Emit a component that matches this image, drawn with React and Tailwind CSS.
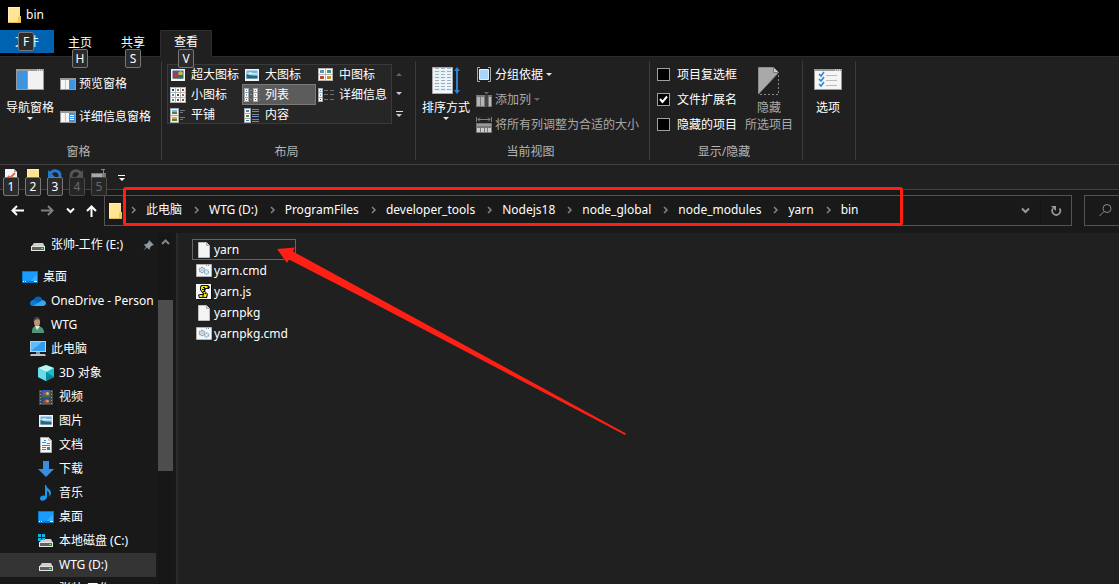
import React from "react";

const FONT = "font-['Noto_Sans','Noto_Sans_CJK_SC',sans-serif]";

function Svg({ w = 16, h = 16, children, className = "" }) {
  return (
    <svg width={w} height={h} viewBox={`0 0 ${w} ${h}`} className={`shrink-0 ${className}`} aria-hidden="true">
      {children}
    </svg>
  );
}

function Caret({ color = "#e6e6e6", up = false }) {
  return (
    <Svg w={6} h={3}>
      <path d={up ? "M0 3h6L3 0z" : "M0 0h6L3 3z"} fill={color} />
    </Svg>
  );
}

function FolderIcon() {
  return (
    <Svg w={14} h={16}>
      <path d="M1 0h12v9h1v7H1z" fill="#ffe594" />
      <path d="M1 0h12v1H1zM1 0h1v16H1z" fill="#fff0bb" />
      <path d="M11 15V10l1.500-1H14v6.500z" fill="#f0c95b" />
      <path d="M1 15h13v1H1z" fill="#e3bb50" />
    </Svg>
  );
}

function NavPaneIcon() {
  return (
    <Svg w={28} h={21}>
      <path d="M0 0h28v21H0z" fill="#9a9a9a" />
      <path d="M1 2h10v18H1z" fill="#3f95dd" />
      <path d="M12 2h15v18H12z" fill="#f2f2f2" />
      <path d="M21 0.500h1v1h-1zM23 .5h1v1h-1zM25 .5h1v1h-1z" fill="#fff" />
    </Svg>
  );
}

function PreviewPaneIcon({ lines = false }) {
  return (
    <Svg w={16} h={12}>
      <path d="M0 0h16v12H0z" fill="#999" />
      <path d="M1 2h4v9H1zM5.500 2H9v9H5.500z" fill="#f5f5f5" />
      <path d="M9 2h6v9H9z" fill="#3f95dd" />
      {lines && <path d="M10 4.500h4M10 6.500h4M10 8.500h4" stroke="#fff" />}
    </Svg>
  );
}

function PictureTile({ x, y, w, h, tone = "#4b8fc4" }) {
  return (
    <g>
      <rect x={x} y={y} width={w} height={h} fill="#f4f4f4" />
      <rect x={x + 1} y={y + 1} width={w - 2} height={h - 2} fill={tone} />
      <rect x={x + 1} y={y + h / 2} width={w - 2} height={h / 2 - 1} fill="#4d7d55" />
    </g>
  );
}

function PhotoIcon({ vivid = false }) {
  return (
    <Svg w={16} h={12}>
      <path d="M1 0h14v12H1z" fill="#f4f4f4" />
      <path d="M2.500 1.500h11v8h-11z" fill={vivid ? "#2f62b0" : "#6fb2df"} />
      {vivid ? (
        <>
          <path d="M3 5l2.500-2.500L8 6 7 9H3z" fill="#c63322" />
          <circle cx="10.500" cy="4.500" r="2.300" fill="#e4b51e" />
          <path d="M3 8h10v1.500H3zM9 6h4v3H9z" fill="#387139" />
        </>
      ) : (
        <>
          <path d="M3 4.500l3-1.500 3 1h4v1.500H3z" fill="#d9edf7" />
          <path d="M2.500 5l4 1.500 7 .5v2.500h-11z" fill="#2a6579" />
        </>
      )}
    </Svg>
  );
}

function MediumIcons() {
  return (
    <Svg w={16} h={14}>
      <path d="M0 0h15v13H0z" fill="#b5b5b5" />
      <path d="M1 1h6v5H1zM8 1h6v5H8zM1 7h6v5H1zM8 7h6v5H8z" fill="#fff" />
      <path d="M2 2h4v3H2z" fill="#5d93b4" />
      <path d="M9 2h4v3H9z" fill="#4d8a83" />
      <path d="M2 8h4v3H2z" fill="#bb4a32" />
      <path d="M9 8h4v3H9z" fill="#c0902d" />
    </Svg>
  );
}

function SmallIcons() {
  const dots = ["#247", "#585", "#a44", "#58a", "#264", "#b54", "#396", "#456", "#c32"];
  return (
    <Svg>
      <path d="M0 0h16v16H0z" fill="#b5b5b5" />
      {dots.map((c, i) => (
        <g key={i}>
          <rect x={1 + (i % 3) * 5} y={1 + Math.floor(i / 3) * 5} width="4" height="4" fill="#fff" />
          <rect x={2 + (i % 3) * 5} y={2 + Math.floor(i / 3) * 5} width="2" height="2" fill={c} />
        </g>
      ))}
    </Svg>
  );
}

function DotColumn({ x }) {
  return (
    <g>
      <path d={`M${x} 0h5v14h-5z`} fill="#a8a8a8" />
      <path d={`M${x + 1} 1h3v3h-3zM${x + 1} 5h3v4h-3zM${x + 1} 10h3v3h-3z`} fill="#fff" />
      <path d={`M${x + 2} 2h1v1h-1z`} fill="#357bb5" />
      <path d={`M${x + 2} 6.500h1v1h-1z`} fill="#284f9c" />
      <path d={`M${x + 2} 11h1v1h-1z`} fill="#c22" />
    </g>
  );
}

function ListIcon() {
  return (
    <Svg w={16} h={14}>
      <DotColumn x={0} />
      <DotColumn x={9} />
      <path d="M6 2.500h2M6 6.500h2M6 11.500h2M15 2.500h1M15 6.500h1M15 11.500h1" stroke="#888" />
    </Svg>
  );
}

function DetailsIcon() {
  return (
    <Svg w={16} h={14}>
      <DotColumn x={0} />
      <path d="M6 2.500h4M12 2.500h4M6 6.500h4M12 6.500h4M6 11.500h4M12 11.500h4" stroke="#6f6f6f" />
    </Svg>
  );
}

function TilesIcon() {
  return (
    <Svg w={16} h={15}>
      <path d="M0 0h9v15H0z" fill="#a8a8a8" />
      <PictureTile x={1} y={1} w={7} h={6} tone="#78b7df" />
      <PictureTile x={1} y={8} w={7} h={6} tone="#d6aa32" />
      <path d="M10 2.500h5M10 4.500h3M10 9.500h5M10 11.500h3" stroke="#777" />
    </Svg>
  );
}

function ContentIcon() {
  return (
    <Svg w={16} h={15}>
      <path d="M0 0h7v15H0z" fill="#a8a8a8" />
      <path d="M1 1h5v4H1zM1 6h5v4H1zM1 11h5v3H1z" fill="#fff" />
      <path d="M2 2h3v2H2z" fill="#4787b5" />
      <path d="M2 7h3v2H2z" fill="#58845c" />
      <path d="M2 12h3v1H2z" fill="#3278bd" />
      <path d="M8 1.500h7M8 6.500h7M8 11.500h7" stroke="#848484" />
      <path d="M8 3.500h7M8 8.500h7M8 13.500h7" stroke="#5a94dc" />
    </Svg>
  );
}

function SortIcon() {
  return (
    <Svg w={28} h={28}>
      <path d="M0.500.5h20v26H.5z" fill="#f6f6f6" stroke="#aaa" />
      <path d="M1 3h19v3H1zM1 9h19v3H1zM1 15h19v3H1zM1 21h19v3H1z" fill="#e2f0f8" />
      {[1, 4, 7, 10, 13, 16, 19, 22].map((y) => (
        <path key={y} d={`M3 ${y}.500h4M9 ${y}.500h4M15 ${y}.500h4`} stroke="#a3adb3" />
      ))}
      <path d="M25 3v21" stroke="#2e83d0" strokeWidth="2" />
      <path d="M22 4l3-4 3 4zM22 23h6l-3 4z" fill="#2e83d0" />
    </Svg>
  );
}

function GroupIcon() {
  return (
    <Svg w={16} h={15}>
      <path d="M4 .5H1.500v14H4M12 .5h2.500v14H12" fill="none" stroke="#aaa" />
      <path d="M3.500 2.500h9v10h-9z" fill="#a9d5fa" stroke="#dff1ff" />
    </Svg>
  );
}

function AddColumnIcon() {
  return (
    <Svg w={16} h={15}>
      <path d="M0 3h16v12H0z" fill="#777" />
      <path d="M1 5h3v9H1zM5 5h3v9H5z" fill="#b5b5b5" />
      <path d="M9 3h3v12H9z" fill="#444" />
      <path d="M13 5h2v9h-2z" fill="#bbb" />
      <path d="M8 0h5l-2.500 2.500z" fill="#666" />
    </Svg>
  );
}

function FitColumnsIcon() {
  return (
    <Svg w={16} h={16}>
      <path d="M.5 0v5M15.500 0v5M2 2.500h12M4 .5L2 2.500l2 2M12 .5l2 2-2 2" fill="none" stroke="#808080" />
      <path d="M0 6h16v10H0z" fill="#777" />
      <path d="M1 7h14v2H1z" fill="#999" />
      <path d="M1 11h3v4H1zM5 11h3v4H5zM9 11h2v4H9zM12 11h3v4h-3z" fill="#ccc" />
    </Svg>
  );
}

function HideIcon() {
  return (
    <Svg w={22} h={29}>
      <path d="M.5.5h15l5 5L.5 27z" fill="#a9a9a9" stroke="#8d8d8d" />
      <path d="M15.500.5v5h5" fill="#ccc" stroke="#777" />
      <path d="M20.500 8v20M2 27.500h18" stroke="#8a8a8a" strokeDasharray="2 2" />
    </Svg>
  );
}

function OptionsIcon() {
  return (
    <Svg w={28} h={21}>
      <path d="M0 0h28v21H0z" fill="#999" />
      <path d="M1 2h26v18H1z" fill="#f5f5f5" />
      <path d="M21 .5h1v1h-1zM23 .5h1v1h-1zM25 .5h1v1h-1z" fill="#fff" />
      <path d="M5 5l2 2 3-4M5 10l2 2 3-4M5 15l2 2 3-4" fill="none" stroke="#2e83d0" strokeWidth="1.500" />
      <path d="M12 6.500h11M12 11.500h11M12 16.500h11" stroke="#bbb" />
    </Svg>
  );
}

function DriveIcon({ windows = false }) {
  return (
    <Svg w={16} h={14}>
      <path d="M4 5h9l2 4H1z" fill="#cfcfcf" />
      {windows && <path d="M0 0h3v3H0zM4 0h3v3H4zM0 4h3v3H0zM4 4h3v2H4z" fill="#16b5e8" />}
      <path d="M1 8h14v5H1z" fill="#e4e4e4" />
      <path d="M2 9h12v3H2z" fill="#606060" />
      <path d="M11 10h2v1h-2z" fill="#55ed55" />
    </Svg>
  );
}

function DesktopIcon() {
  return (
    <Svg w={16} h={12}>
      <path d="M0 0h16v12H0z" fill="#0877c9" />
      <path d="M1 1h14v9H1z" fill="#1a9cff" />
      <path d="M9 10l6-7v7z" fill="#36b1ff" />
      <path d="M1 10h1v1H1zM3 10h1v1H3zM12 10h3v1h-3z" fill="#fff" />
    </Svg>
  );
}

function CloudIcon() {
  return (
    <Svg w={16} h={11}>
      <path d="M3.500 4C5-.5 11-1 12.500 4L9 8 0 9c-.3-2.800 1-4.600 3.500-5z" fill="#0861ba" />
      <path d="M4 4l9 6H3C.5 10-.5 7.500.5 5.800 1.300 4.400 2.500 3.900 4 4z" fill="#1079d2" />
      <path d="M3 10L12.500 4C17 4.500 17 10 13 10z" fill="#31aaf0" />
    </Svg>
  );
}

function PersonIcon() {
  return (
    <Svg>
      <path d="M2 16c0-5 1-7 5-7 4 0 7 2 7 7z" fill="#4d9879" />
      <path d="M5 9l2 4 3-4z" fill="#f2f2f2" />
      <ellipse cx="7" cy="5" rx="3" ry="4.500" fill="#bd9677" />
      <path d="M3.500 5C3-1 10-1 10.500 4L8 2 5 3z" fill="#4d4541" />
    </Svg>
  );
}

function ComputerIcon() {
  return (
    <Svg>
      <path d="M0 0h16v11H0z" fill="#a5d7f1" />
      <path d="M1 1h14v9H1z" fill="#309df0" />
      <path d="M1 10L12 1H1z" fill="#64bbfa" />
      <path d="M6 11h4v2H6z" fill="#8194a4" />
      <path d="M1 13h14l1 2H0z" fill="#b9c6d1" />
    </Svg>
  );
}

function CubeIcon() {
  return (
    <Svg>
      <path d="M8 0l8 3v9l-8 4-8-4V3z" fill="#17bdd2" />
      <path d="M8 0l8 3-8 4-8-4z" fill="#bcf3f5" />
      <path d="M0 3l8 4v9l-8-4z" fill="#69dce5" />
      <path d="M8 7l8 5-8 4z" fill="#07899f" />
    </Svg>
  );
}

function FilmIcon() {
  return (
    <Svg>
      <path d="M1 1h14v15H1z" fill="#4a4a4a" />
      <path d="M4 1h8v7H4z" fill="#345eb7" />
      <path d="M4 9h8v6H4z" fill="#294987" />
      <path d="M5 5l3-3 1 4zM5 13l3-3 1 4z" fill="#d6462b" />
      <circle cx="9.500" cy="4.500" r="1.500" fill="#e8bf2c" />
      <circle cx="9.500" cy="12" r="1.500" fill="#db9d2b" />
      <path d="M4 7h8v1H4zM4 14h8v1H4z" fill="#377843" />
      <path d="M2.500 2v13M13.500 2v13" stroke="#999" strokeDasharray="1 2" />
    </Svg>
  );
}

function DocIcon() {
  return (
    <Svg>
      <path d="M2.500.5h8l3 3v12h-11z" fill="#f6f6f6" stroke="#aaa" />
      <path d="M10 0v4h4" fill="#ccc" />
      <path d="M4 5.500h4M8 3.500H6M9 6.500h3M4 8.500h8M4 10.500h4M4 12.500h4" stroke="#3489c9" />
      <path d="M9 10h3v3H9z" fill="#367f91" />
    </Svg>
  );
}

function DownloadIcon() {
  return (
    <Svg>
      <path d="M5 0h6v8h5l-8 8-8-8h5z" fill="#388fdf" />
    </Svg>
  );
}

function MusicIcon() {
  return (
    <Svg>
      <path d="M7 0h1c1 4 5 4 5 8 0 1-1 3-2 4 1-4-.5-5-2-6v6.500C8 16 2 17 2 13.500 2 11 5 10 7 11z" fill="#169af1" />
    </Svg>
  );
}

function FileIcon() {
  return (
    <Svg>
      <path d="M2.500.5h8l3 3v12h-11z" fill="#f4f4f4" stroke="#bdbdbd" />
      <path d="M10.500.5v3h3" fill="#d8d8d8" stroke="#aaa" />
    </Svg>
  );
}

function CmdIcon() {
  return (
    <Svg>
      <path d="M.5 1.500h15v12H.5z" fill="#f7f7f7" stroke="#b2b2b2" />
      <path d="M10 2h1v1h-1zM12 2h1v1h-1z" fill="#888" />
      <circle cx="6" cy="7" r="2.500" fill="none" stroke="#929ba5" strokeWidth="1.500" strokeDasharray="2 .6" />
      <circle cx="6" cy="7" r=".8" fill="#999" />
      <circle cx="10.500" cy="9" r="2" fill="none" stroke="#85b5d8" strokeWidth="1.500" strokeDasharray="1.500 .5" />
    </Svg>
  );
}

function ScriptIcon() {
  return (
    <Svg>
      <path d="M0 0h15v15H0z" fill="#f6f6f6" />
      <path d="M15 1h1v15H1v-1h14z" fill="#111" />
      <path d="M5 1h7l2 2-1 2h-3l-1 2 3 3-1 4H3l-1-3 2-1h3L4 6V3z" fill="#111" />
      <path d="M6 2h5l1 1-1 1H8v3l3 3-1 3H4l-1-1 1-1h4V9L5 6V3z" fill="#f2e51d" />
      <path d="M7 3.500h2M6 5.500h2M7 7.500h2M8.500 9.500H10M6 12h2" stroke="#111" />
    </Svg>
  );
}

function PinIcon() {
  return (
    <Svg w={11} h={11}>
      <path d="M6 0l5 5-2 .5-2 2L6.500 10 4 7.500.5 10.500 3 7 .8 4.500 3.500 4l2-2z" fill="#8d9aa5" />
    </Svg>
  );
}

function Chevron({ dir = "right", className = "text-[#858585]" }) {
  const d = dir === "right" ? "M1 1l3 3-3 3" : dir === "up" ? "M1 5l3.500-3.500L8 5" : "M1 1.500L4.500 5 8 1.500";
  return (
    <svg
      width={dir === "right" ? 6 : 9}
      height={dir === "right" ? 8 : 7}
      className={`shrink-0 ${className}`}
      fill="none"
      stroke="currentColor"
      strokeWidth={dir === "right" ? 1.5 : 2}
      aria-hidden="true"
    >
      <path d={d} />
    </svg>
  );
}

function KeyTip({ children, className = "", dim = false }) {
  return (
    <span
      className={`absolute z-10 flex h-[19px] w-4 items-center justify-center rounded-[2px] border text-xs leading-none ${
        dim ? "border-[#4a4a4a] bg-[#262626] text-[#6a6a6a]" : "border-[#777] bg-[#2b2b2b] text-white"
      } ${className}`}
    >
      {children}
    </span>
  );
}

function Group({ label, className = "", children }) {
  return (
    <section className={`flex shrink-0 flex-col border-r border-[#3c3c3c] ${className}`}>
      <div className="flex h-[85px]">{children}</div>
      <h2 className="pr-1 text-center leading-4 text-[#b4b4b4]">{label}</h2>
    </section>
  );
}

const layouts = [
  ["超大图标", <PhotoIcon vivid />],
  ["大图标", <PhotoIcon />],
  ["中图标", <MediumIcons />],
  ["小图标", <SmallIcons />],
  ["列表", <ListIcon />],
  ["详细信息", <DetailsIcon />],
  ["平铺", <TilesIcon />],
  ["内容", <ContentIcon />],
];

function Ribbon() {
  return (
    <div className="flex h-[109px] border-t border-[#2b2b2b] border-b-[#424242] border-b bg-[#202020] pt-1 pb-1">
      <Group label="窗格" className="w-[162px]">
        <button className="flex w-[60px] flex-col items-center pt-2">
          <NavPaneIcon />
          <span className="mt-[10px] leading-4">导航窗格</span>
          <span className="mt-px"><Caret /></span>
        </button>
        <div className="flex flex-col gap-4 pt-[14px]">
          <button className="flex items-center gap-[3px] leading-[17px]"><PreviewPaneIcon />预览窗格</button>
          <button className="flex items-center gap-[3px] leading-[17px]"><PreviewPaneIcon lines />详细信息窗格</button>
        </div>
      </Group>

      <Group label="布局" className="w-[254px]">
        <div className="ml-[5px] mt-[3px] grid h-[60px] grid-cols-[74px_74px_75px] grid-rows-[19px_21px_20px] border border-[#3a3a3a] bg-[#262626]">
          {layouts.map(([name, icon]) => (
            <button
              key={name}
              className={`flex items-center gap-[5px] whitespace-nowrap leading-4 ${
                name === "列表" ? "border border-[#7a7a7a] bg-[#5c5c5c] pl-px" : "pl-[2px]"
              }`}
            >
              {icon}
              {name}
            </button>
          ))}
        </div>
        <div className="flex w-[14px] flex-col items-center justify-between pt-[12px] pb-[27px]">
          <Caret up color="#666" />
          <Caret color="#ccc" />
          <span className="flex flex-col items-center gap-[2px]">
            <span className="h-px w-[7px] bg-[#ddd]" />
            <Caret color="#ccc" />
          </span>
        </div>
      </Group>

      <Group label="当前视图" className="w-[234px]">
        <button className="flex w-[60px] flex-col items-center pt-[6px]">
          <SortIcon />
          <span className="mt-[5px] leading-4">排序方式</span>
          <span className="mt-px"><Caret /></span>
        </button>
        <div className="flex flex-col items-start gap-2 pt-[5px]">
          <button className="flex items-center gap-[3px] leading-[17px]"><GroupIcon />分组依据<Caret /></button>
          <button className="flex items-center gap-[3px] leading-[17px] text-[#aaa]"><AddColumnIcon />添加列<Caret color="#666" /></button>
          <button className="flex items-center gap-[3px] whitespace-nowrap leading-[17px] text-[#aaa]"><FitColumnsIcon />将所有列调整为合适的大小</button>
        </div>
      </Group>

      <Group label="显示/隐藏" className="w-[153px]">
        <div className="ml-[7px] flex flex-col gap-2 pt-[5px]">
          {["项目复选框", "文件扩展名", "隐藏的项目"].map((t, i) => (
            <label key={t} className="flex h-[17px] items-center gap-[7px] whitespace-nowrap">
              <span className="relative flex">
                <input
                  type="checkbox"
                  defaultChecked={i === 1}
                  className="peer size-[13px] appearance-none border border-[#a0a0a0] bg-black"
                />
                <svg width="13" height="13" className="pointer-events-none absolute inset-0 hidden peer-checked:block" aria-hidden="true">
                  <path d="M3 6l2.500 3L10 3.500" fill="none" stroke="#fff" strokeWidth="2" />
                </svg>
              </span>
              {t}
            </label>
          ))}
        </div>
        <button className="ml-[7px] flex w-[50px] flex-col items-center pt-[6px] text-[#aaa]">
          <HideIcon />
          <span className="mt-[3px] leading-[17px]">隐藏</span>
          <span className="whitespace-nowrap leading-[17px]">所选项目</span>
        </button>
      </Group>

      <Group label="" className="w-[53px]">
        <button className="flex w-[50px] flex-col items-center pt-2">
          <OptionsIcon />
          <span className="mt-[10px] leading-4">选项</span>
        </button>
      </Group>
    </div>
  );
}

function QuickAccess() {
  return (
    <div className="flex h-[25px] border-b border-[#424242] bg-[#202020] pl-[3px] pt-1">
      <button aria-label="属性" className="relative flex w-[22px] pl-[1px]">
        <Svg>
          <path d="M1 0h9l3 3v12H1z" fill="#f4f4f4" />
          <path d="M10 0v3h3" fill="#aaa" />
          <path d="M4 7l2 2 5-5" fill="none" stroke="#e06a4b" strokeWidth="2" />
        </Svg>
        <KeyTip className="left-0 top-2">1</KeyTip>
      </button>
      <button aria-label="新建文件夹" className="relative flex w-[22px] pl-[1px]">
        <FolderIcon />
        <KeyTip className="left-0 top-2">2</KeyTip>
      </button>
      <button aria-label="撤消" className="relative flex w-[22px]">
        <Svg>
          <path d="M3 5c3-5 10-4 10 2 0 3-2 5-5 6" fill="none" stroke="#2878c8" strokeWidth="3" />
          <path d="M1 1v8h8z" fill="#2878c8" />
        </Svg>
        <KeyTip className="left-0 top-2">3</KeyTip>
      </button>
      <button aria-label="恢复" className="relative flex w-[22px]">
        <Svg>
          <path d="M12 5C9 0 2 1 2 7c0 3 2 5 5 6" fill="none" stroke="#555" strokeWidth="3" />
          <path d="M14 1v8H6z" fill="#555" />
        </Svg>
        <KeyTip dim className="left-0 top-2">4</KeyTip>
      </button>
      <button aria-label="重命名" className="relative flex w-[22px]">
        <Svg>
          <path d="M0 4h15v7H0z" fill="#777" />
          <path d="M1 5h10v3H1z" fill="#aaa" />
          <path d="M10 .5h4M12.500 0v14" stroke="#888" />
        </Svg>
        <KeyTip dim className="left-0 top-2">5</KeyTip>
      </button>
      <button aria-label="自定义快速访问工具栏" className="ml-[5px] flex flex-col items-center gap-[2px] pt-[6px]">
        <span className="h-px w-[7px] bg-white" />
        <Caret color="#fff" />
      </button>
    </div>
  );
}

const crumbs = ["此电脑", "WTG (D:)", "ProgramFiles", "developer_tools", "Nodejs18", "node_global", "node_modules", "yarn", "bin"];

function Arrow({ dir, color }) {
  const d = { left: "M6 1L1.500 5.500 6 10M2 5.500h11", right: "M7 1l4.500 4.500L7 10M0 5.500h11", up: "M1 6l4.500-4.500L10 6M5.500 2v10" }[dir];
  return (
    <Svg w={13} h={12}>
      <path d={d} fill="none" stroke={color} strokeWidth="2" />
    </Svg>
  );
}

function AddressBar() {
  return (
    <div className="flex h-[43px] items-start bg-[#191919] pt-[5px]">
      <div className="flex h-[31px] w-[104px] shrink-0 items-center pl-[11px]">
        <button aria-label="后退"><Arrow dir="left" color="#fff" /></button>
        <button aria-label="前进" className="ml-[17px]"><Arrow dir="right" color="#808080" /></button>
        <button aria-label="最近浏览的位置" className="ml-3"><Chevron dir="down" className="text-white" /></button>
        <button aria-label="向上" className="ml-[11px]"><Arrow dir="up" color="#fff" /></button>
      </div>
      <div className="relative flex h-[31px] min-w-0 grow items-center border border-[#535353]">
        <div className="ml-[3px]"><FolderIcon /></div>
        <nav aria-label="地址" className="flex items-center pb-px pl-[9px]">
          {crumbs.map((c) => (
            <span key={c} className="flex items-center whitespace-nowrap">
              <Chevron />
              <a href="#" className="ml-[9px] mr-3 leading-4">{c}</a>
            </span>
          ))}
        </nav>
        <button aria-label="上一个位置" className="ml-auto mr-[10px]"><Chevron dir="down" className="text-[#999]" /></button>
        <button aria-label="刷新" className="flex h-full w-[31px] items-center justify-center border-l border-[#151515]">
          <Svg w={12} h={12}>
            <path d="M9.500 3.500A4 4 0 1 1 3 3.500" fill="none" stroke="#999" strokeWidth="1.700" />
            <path d="M1 1h5v5z" fill="#999" />
          </Svg>
        </button>
        <div className="pointer-events-none absolute -top-[9px] left-[18px] h-[39px] w-[780px] rounded-[3px] border-[3px] border-[#ff2015]" />
      </div>
      <label className="ml-3 flex h-[31px] w-[35px] shrink-0 items-center border border-r-0 border-[#535353] pl-[14px]">
        <Svg w={13} h={13}>
          <circle cx="8" cy="4.500" r="4" fill="none" stroke="#8a8a8a" />
          <path d="M5 7.500L.5 12" stroke="#8a8a8a" />
        </Svg>
        <input aria-label="搜索" className="w-0 min-w-0 grow bg-transparent outline-none" />
      </label>
    </div>
  );
}

const tree = [
  [<DesktopIcon />, "桌面", 0],
  [<CloudIcon />, "OneDrive - Person", 1],
  [<PersonIcon />, "WTG", 1],
  [<ComputerIcon />, "此电脑", 1],
  [<CubeIcon />, "3D 对象", 2],
  [<FilmIcon />, "视频", 2],
  [<PhotoIcon />, "图片", 2],
  [<DocIcon />, "文档", 2],
  [<DownloadIcon />, "下载", 2],
  [<MusicIcon />, "音乐", 2],
  [<DesktopIcon />, "桌面", 2],
  [<DriveIcon windows />, "本地磁盘 (C:)", 2],
  [<DriveIcon />, "WTG (D:)", 2],
  [<DriveIcon />, "张帅-工作 (E:)", 2],
];
const indents = ["pl-[22px]", "pl-[30px]", "pl-[38px]"];

function Sidebar() {
  return (
    <aside className="flex w-[178px] shrink-0 overflow-hidden border-r-2 border-[#2b2b2b] bg-[#191919]">
      <div className="w-[158px] shrink-0">
        <a href="#" className="flex h-6 items-center gap-[5px] whitespace-nowrap pl-[30px]">
          <DriveIcon />
          张帅-工作 (E:)
          <span className="ml-auto mr-1"><PinIcon /></span>
        </a>
        <ul className="mt-2">
          {tree.map(([icon, name, level], i) => (
            <li key={i}>
              <a
                href="#"
                className={`mr-[2px] flex h-6 items-center gap-[5px] whitespace-nowrap ${indents[level]} ${
                  name === "WTG (D:)" ? "bg-[#333]" : ""
                }`}
              >
                {icon}
                {name}
              </a>
            </li>
          ))}
        </ul>
      </div>
      <div className="flex w-[15px] flex-col items-center bg-[#171717] pt-[6px]">
        <Chevron dir="up" />
        <div className="mt-[54px] h-[171px] w-full bg-[#4d4d4d]" />
      </div>
    </aside>
  );
}

const files = [
  [<FileIcon />, "yarn"],
  [<CmdIcon />, "yarn.cmd"],
  [<ScriptIcon />, "yarn.js"],
  [<FileIcon />, "yarnpkg"],
  [<CmdIcon />, "yarnpkg.cmd"],
];

export default function App() {
  return (
    <div className={`relative flex h-screen flex-col overflow-hidden bg-[#202020] text-xs text-white ${FONT}`}>
      <header className="shrink-0 bg-black">
        <div className="flex h-[30px] items-center gap-[5px] pl-[7px]">
          <FolderIcon />
          <h1 className="leading-4">bin</h1>
        </div>
        <div className="flex h-[26px] items-start">
          <button className="relative flex h-[23px] w-[54px] items-center justify-center bg-[#0063b1]">
            文件
            <KeyTip className="left-[18px] top-[2px]">F</KeyTip>
          </button>
          <button className="relative flex h-[25px] w-[52px] items-center justify-center">
            主页
            <KeyTip className="left-[18px] top-[19px]">H</KeyTip>
          </button>
          <button className="relative ml-[1px] flex h-[25px] w-[52px] items-center justify-center">
            共享
            <KeyTip className="left-[18px] top-[19px]">S</KeyTip>
          </button>
          <button className="relative ml-[1px] flex h-[27px] w-[52px] items-start justify-center border border-b-0 border-[#2e2e2e] bg-[#202020] pt-[3px]">
            查看
            <KeyTip className="left-[17px] top-[18px]">V</KeyTip>
          </button>
        </div>
      </header>
      <div className="shrink-0">
        <Ribbon />
        <QuickAccess />
        <AddressBar />
      </div>
      <div className="flex min-h-0 grow">
        <Sidebar />
        <main className="grow overflow-hidden pl-[14px] pt-[6px]">
          <ul className="w-[104px]">
            {files.map(([icon, name], i) => (
              <li key={name}>
                <a
                  href="#"
                  className={`flex h-[21px] items-center gap-[2px] whitespace-nowrap border pl-[3px] ${
                    i === 0 ? "border-[#666]" : "border-transparent"
                  }`}
                >
                  {icon}
                  {name}
                </a>
              </li>
            ))}
          </ul>
        </main>
      </div>
      <svg width="360" height="200" viewBox="270 240 360 200" className="pointer-events-none absolute left-[270px] top-[240px]" aria-hidden="true">
        <path d="M277 249L295 247.500L293 251.500L358 287L626 433.500L625 435L358 295L289 259.500L287 263z" fill="#ff2015" />
      </svg>
    </div>
  );
}
